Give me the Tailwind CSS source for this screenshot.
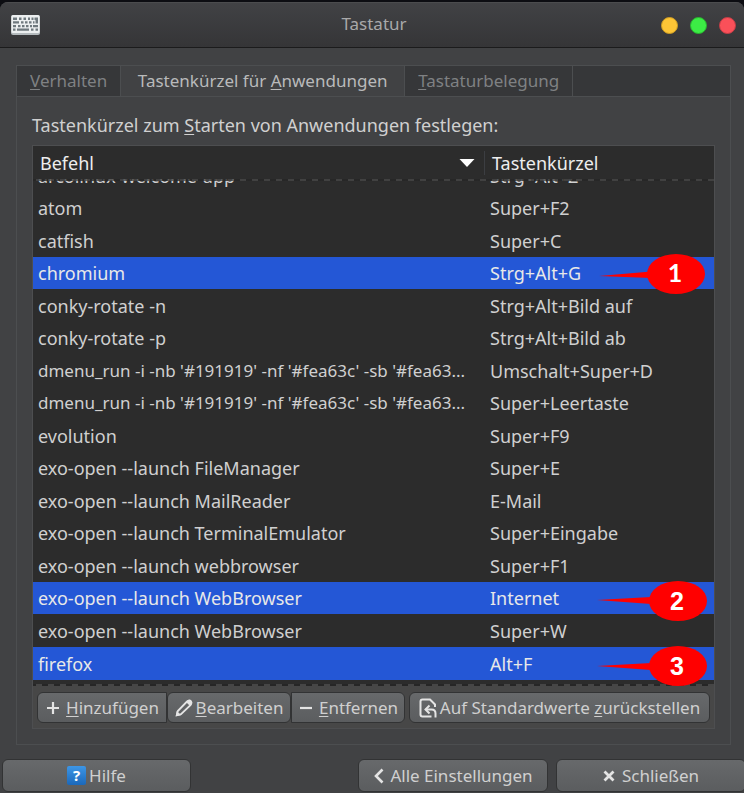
<!DOCTYPE html>
<html lang="de">
<head>
<meta charset="utf-8">
<meta name="viewport" content="width=device-width, initial-scale=1">
<title>Tastatur</title>
<script src="https://cdn.jsdelivr.net/npm/@tailwindcss/browser@4"></script>
</head>
<body class="bg-[#0c0d12] pt-[2px] font-['Noto_Sans',sans-serif] text-lg leading-6 text-[#d0d0d0]">
<div class="flex min-h-[calc(100vh-2px)] flex-col overflow-hidden rounded-t-lg bg-[#414244]">
  <header class="flex h-[46px] items-center border-t border-b border-t-[#4b4c4e] border-b-[#1b1b1c] bg-linear-to-b from-[#414245] to-[#353537] pr-2 pl-[11px]">
    <svg class="h-5 w-[29px] shrink-0" viewBox="0 0 29 20" aria-hidden="true">
      <rect width="29" height="20" rx="2" fill="#b4babd"/>
      <rect x="0.500" width="28" height="18" rx="1.500" fill="#eceff0"/>
      <g fill="#6f797e">
        <path d="M2 2.500h4v2.500H2zM8 2.500h2.500v2.500H8zM12.500 2.500h2.500v2.500h-2.500zM17 2.500h2v2.500h-2zM20.500 2.500h2v2.500h-2zM23.500 2.500h3.500v6h-2.500V5h-1zM2 6.200h6v2.300H2zM10 6.200h2.500v2.300H10zM14 6.200h2.500v2.300H14zM18 6.200h2.500v2.300H18zM22 6.200h1.500v2.300H22zM2 10h3v2.300H2zM7 10h2.500v2.300H7zM11 10h2.500v2.300H11zM15 10h2.500v2.300H15zM19 10h2v2.300h-2zM22 10h5v2.300h-5zM2 13.500h2.500v2.300H2zM6 13.500h12v2.300H6zM20 13.500h2.500v2.300H20zM24.500 13.500h2.500v2.300h-2.500z"/>
      </g>
    </svg>
    <h1 class="flex-1 pb-[2px] pl-[47px] text-center text-[17px] text-[#a9a9aa]">Tastatur</h1>
    <div class="flex gap-3">
      <button type="button" aria-label="Minimieren" class="size-[17px] rounded-full border border-[#cd9c22] bg-[#fdc536]"></button>
      <button type="button" aria-label="Maximieren" class="size-[17px] rounded-full border border-[#28b52f] bg-[#3cec45]"></button>
      <button type="button" aria-label="Fenster schließen" class="size-[17px] rounded-full border border-[#c33d46] bg-[#fa5059]"></button>
    </div>
  </header>

  <main class="mx-4 mt-[17px] mr-[13px] flex flex-1 flex-col border border-[#4c4e50]">
    <div role="tablist" class="flex h-[31px] border-b border-[#4c4e50] bg-[#363739] text-[17px] whitespace-nowrap text-[#7f8183] [&_button]:px-[13px]">
      <button type="button" role="tab" class="border-r border-[#4c4e50]"><u class="underline-offset-2">V</u>erhalten</button>
      <button type="button" role="tab" aria-selected="true" class="w-[284px] border-r border-[#4c4e50] bg-[#414244] text-[#b9babb]">Tastenkürzel für <u class="underline-offset-2">A</u>nwendungen</button>
      <button type="button" role="tab" class="border-r border-[#4c4e50]"><u class="underline-offset-2">T</u>astaturbelegung</button>
    </div>
    <section role="tabpanel" class="px-[15px] pt-4 pb-[15px]">
      <p class="mb-2">Tastenkürzel zum <u class="underline-offset-2">S</u>tarten von Anwendungen festlegen:</p>
      <div class="border border-[#4d4e50] bg-[#2c2c2c]">
        <div class="relative pb-[6px]">
          <table class="w-full table-fixed border-collapse text-left whitespace-nowrap">
            <colgroup><col><col class="w-[229px]"></colgroup>
            <thead>
              <tr class="h-[33px] text-[#eeeeee]">
                <th class="p-0 font-normal">
                  <div class="flex items-center justify-between border-r border-[#3c3e42] pr-[9px] pl-[7px]">Befehl
                    <svg class="h-2 w-4" viewBox="0 0 16 8" aria-hidden="true"><path d="M0.500 0h15L8 8z" fill="#fff"/></svg>
                  </div>
                </th>
                <th class="p-0 pl-[7px] font-normal">Tastenkürzel</th>
              </tr>
            </thead>
            <tbody class="[&_td]:p-0 [&_td]:pl-[5px]">
              <tr><td><div class="flex h-[13px] items-end overflow-hidden leading-8">arcolinux-welcome-app</div></td><td><div class="flex h-[13px] items-end overflow-hidden leading-8">Strg+Alt+Z</div></td></tr>
              <tr class="h-8"><td>atom</td><td>Super+F2</td></tr>
              <tr class="h-[33px]"><td>catfish</td><td>Super+C</td></tr>
              <tr class="h-8 bg-[#2457d6] text-[#e8e8e8]"><td>chromium</td><td class="relative">Strg+Alt+G
                <svg class="absolute -top-[3px] right-[9px] h-10 w-[106px]" viewBox="0 0 106 40" role="img" aria-label="Hinweis 1"><path d="M0 22L52 17.500V24z" fill="#f00"/><ellipse cx="77" cy="20" rx="29" ry="20" fill="#f00"/><text x="76" y="28" text-anchor="middle" fill="#fff" class="font-['Lato',sans-serif] text-[25px] font-bold">1</text></svg></td></tr>
              <tr class="h-[33px]"><td>conky-rotate -n</td><td>Strg+Alt+Bild auf</td></tr>
              <tr class="h-8"><td>conky-rotate -p</td><td>Strg+Alt+Bild ab</td></tr>
              <tr class="h-[33px]"><td class="text-[17px]">dmenu_run -i -nb '#191919' -nf '#fea63c' -sb '#fea63...</td><td>Umschalt+Super+D</td></tr>
              <tr class="h-8"><td class="text-[17px]">dmenu_run -i -nb '#191919' -nf '#fea63c' -sb '#fea63...</td><td>Super+Leertaste</td></tr>
              <tr class="h-[33px]"><td>evolution</td><td>Super+F9</td></tr>
              <tr class="h-8"><td>exo-open --launch FileManager</td><td>Super+E</td></tr>
              <tr class="h-[33px]"><td>exo-open --launch MailReader</td><td>E-Mail</td></tr>
              <tr class="h-8"><td>exo-open --launch TerminalEmulator</td><td>Super+Eingabe</td></tr>
              <tr class="h-[33px]"><td>exo-open --launch webbrowser</td><td>Super+F1</td></tr>
              <tr class="h-8 bg-[#2457d6] text-[#e8e8e8]"><td>exo-open --launch WebBrowser</td><td class="relative">Internet
                <svg class="absolute -top-px right-[7px] h-10 w-[110px]" viewBox="0 0 110 40" role="img" aria-label="Hinweis 2"><path d="M0 19L54 16V23z" fill="#f00"/><ellipse cx="81" cy="20" rx="29" ry="20" fill="#f00"/><text x="80" y="29" text-anchor="middle" fill="#fff" class="font-['Liberation_Sans',sans-serif] text-[25px] font-bold">2</text></svg></td></tr>
              <tr class="h-[33px]"><td>exo-open --launch WebBrowser</td><td>Super+W</td></tr>
              <tr class="h-[33px] bg-[#2457d6] text-[#e8e8e8]"><td>firefox</td><td class="relative">Alt+F
                <svg class="absolute -top-px right-[7px] z-10 h-10 w-[110px]" viewBox="0 0 110 40" role="img" aria-label="Hinweis 3"><path d="M0 20L54 17V24z" fill="#f00"/><ellipse cx="81" cy="20" rx="29" ry="20" fill="#f00"/><text x="80" y="29" text-anchor="middle" fill="#fff" class="font-['Liberation_Sans',sans-serif] text-[25px] font-bold">3</text></svg></td></tr>
            </tbody>
          </table>
          <div class="absolute inset-x-0 top-[33px] h-[2px] bg-[repeating-linear-gradient(90deg,#262626_0_3px,#464646_3px_9px,#262626_9px_12px)] opacity-80"></div>
          <div class="absolute inset-x-0 bottom-0 h-[2px] bg-[repeating-linear-gradient(90deg,#262626_0_3px,#464646_3px_9px,#262626_9px_12px)]"></div>
        </div>
        <div class="flex h-[42px] items-center bg-[#474747] px-1 pt-px text-[17px] whitespace-nowrap [&_button]:flex [&_button]:h-[31px] [&_button]:items-center [&_button]:justify-center [&_button]:border [&_button]:border-[#323334] [&_button]:bg-linear-to-b [&_button]:from-[#67696b] [&_button]:to-[#5b5d5f]">
          <button type="button" class="w-[130px] gap-[5px] rounded-l-md">
            <svg class="size-4" viewBox="0 0 16 16" aria-hidden="true"><path d="M2 8h12M8 2v12" stroke="#e4e4e4" stroke-width="2.200"/></svg>
            <span><u class="underline-offset-2">H</u>inzufügen</span></button>
          <button type="button" class="w-[124px] gap-[3px] rounded-md">
            <svg class="size-[18px]" viewBox="0 0 18 18" aria-hidden="true"><path d="M1.800 16.200l1-4.200L12 2.500q2-1.700 3.500-.2t.2 3.500L6 15.200z" fill="none" stroke="#e4e4e4" stroke-width="1.800"/><path d="M0.700 17.300l1-5.300 4.300 4.300zM11 3l2-2q2-1 3.500.500T17 5l-2 2z" fill="#e4e4e4"/></svg>
            <span><u class="underline-offset-2">B</u>earbeiten</span></button>
          <button type="button" class="w-[114px] gap-[5px] rounded-r-md">
            <svg class="size-4" viewBox="0 0 16 16" aria-hidden="true"><path d="M2 8h12" stroke="#e4e4e4" stroke-width="2.200"/></svg>
            <span><u class="underline-offset-2">E</u>ntfernen</span></button>
          <button type="button" class="ml-1 flex-1 gap-[3px] rounded-md">
            <svg class="h-5 w-[18px]" viewBox="0 0 18 20" fill="none" stroke="#e4e4e4" stroke-width="2" aria-hidden="true"><path d="M12.500 18.500H3.500Q1.500 18.500 1.500 16.500V3.500Q1.500 1.500 3.500 1.500H11L16 6.500V9"/><path d="M6.500 11.500H12.500Q16.500 11.500 16.500 15.500V19.500"/><path d="M10.500 7.500L6.500 11.500 10.500 15.500"/></svg>
            <span>Auf Standardwerte <u class="underline-offset-2">z</u>urückstellen</span></button>
        </div>
      </div>
    </section>
  </main>

  <footer class="mt-[14px] -mr-[2px] mb-px ml-[2px] flex h-[33px] text-[17px] whitespace-nowrap [&_button]:flex [&_button]:items-center [&_button]:justify-center [&_button]:rounded-md [&_button]:border [&_button]:border-[#323334] [&_button]:bg-linear-to-b [&_button]:from-[#67696b] [&_button]:to-[#5b5d5f]">
    <button type="button" class="w-[189px] gap-[3px]">
      <svg class="size-[19px]" viewBox="0 0 19 19" aria-hidden="true"><defs><linearGradient id="help" x2="0" y2="1"><stop stop-color="#3d96e6"/><stop offset="1" stop-color="#1b68ba"/></linearGradient></defs><rect width="19" height="19" rx="2" fill="url(#help)"/><text x="9.500" y="15" text-anchor="middle" fill="#fff" class="font-['Noto_Sans',sans-serif] text-[15px] font-bold">?</text></svg>
      Hilfe</button>
    <button type="button" class="ml-auto w-[190px] gap-[6px]">
      <svg class="h-4 w-[11px]" viewBox="0 0 11 16" aria-hidden="true"><path d="M9.500 1.500L3 8l6.500 6.500" fill="none" stroke="#e4e4e4" stroke-width="2.600"/></svg>
      Alle Einstellungen</button>
    <button type="button" class="ml-2 w-[190px] gap-[7px]">
      <svg class="size-3" viewBox="0 0 12 12" aria-hidden="true"><path d="M1.500 1.500l9 9M10.500 1.500l-9 9" stroke="#e4e4e4" stroke-width="2.800"/></svg>
      Schließen</button>
  </footer>
</div>
</body>
</html>
